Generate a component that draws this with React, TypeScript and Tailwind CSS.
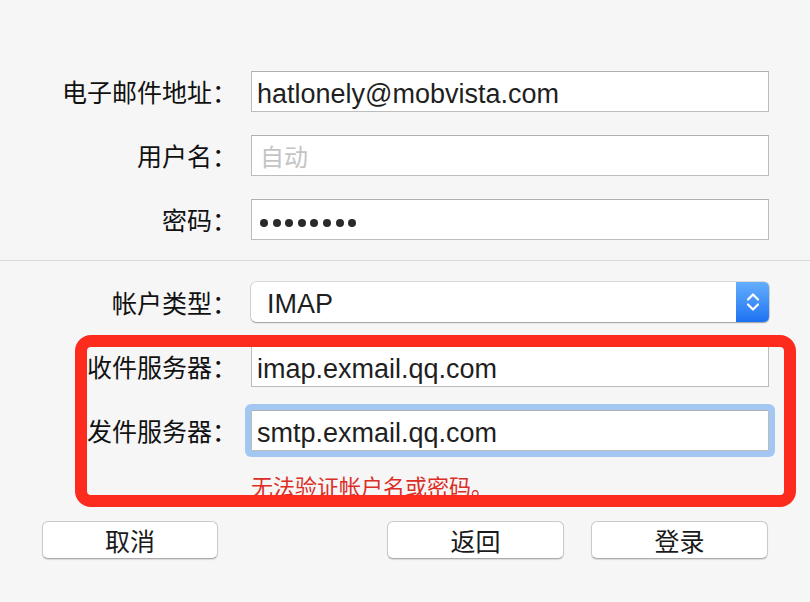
import React from "react";

const cjk = { fontFamily: '"Noto Sans CJK SC", "Noto Sans", sans-serif' };
const latin = { fontFamily: '"Liberation Sans", Arial, "Noto Sans CJK SC", sans-serif' };

function Label({ children }: { children: React.ReactNode }) {
  return (
    <div
      className="w-[237px] shrink-0 text-right text-[25px] leading-none text-[#111]"
      style={cjk}
    >
      {children}
    </div>
  );
}

function Field({ children, className = "" }: { children: React.ReactNode; className?: string }) {
  return (
    <div
      className={
        "ml-[14px] flex h-[41px] w-[518px] items-center border border-[#bcbcbc] border-t-[#b0b0b0] bg-white pl-[5px] pt-[6px] text-[27px] leading-none text-[#1f1f1f] " +
        className
      }
      style={latin}
    >
      {children}
    </div>
  );
}

function Btn({ children, w }: { children: React.ReactNode; w: string }) {
  return (
    <div
      className={
        "flex h-[38px] items-center justify-center rounded-[6px] border border-[#cacaca] border-b-[#adadad] bg-white text-[25px] leading-none text-[#1a1a1a] shadow-[0_1px_1px_rgba(0,0,0,0.12)] " +
        w
      }
      style={cjk}
    >
      {children}
    </div>
  );
}

export default function App() {
  return (
    <div className="relative h-[602px] w-[810px] overflow-hidden bg-[#f6f6f6]">
      <div className="flex flex-col pt-[71px]">
        <div className="flex items-center">
          <Label>电子邮件地址：</Label>
          <Field>hatlonely@mobvista.com</Field>
        </div>
        <div className="mt-[23px] flex items-center">
          <Label>用户名：</Label>
          <Field>
            <span className="-mt-[6px] ml-[3px] text-[24px] leading-none text-[#c4c4c4]" style={cjk}>
              自动
            </span>
          </Field>
        </div>
        <div className="mt-[23px] flex items-center">
          <Label>密码：</Label>
          <Field>
            <div className="ml-[3px] flex gap-[4.6px]">
              {[0, 1, 2, 3, 4, 5, 6, 7].map((i) => (
                <span key={i} className="block h-[8px] w-[8px] rounded-full bg-[#2a2a2a]" />
              ))}
            </div>
          </Field>
        </div>

        <div className="mt-[20px] h-px w-full bg-[#d9d9d9]" />

        <div className="mt-[21px] flex items-center">
          <Label>帐户类型：</Label>
          <div
            className="ml-[14px] flex h-[40px] w-[518px] items-stretch overflow-hidden rounded-[5px] bg-white shadow-[0_0_0_0.5px_rgba(0,0,0,0.22),0_1px_1.5px_rgba(0,0,0,0.28)]"
            style={latin}
          >
            <div className="flex flex-1 items-center pl-[16px] pt-[4px] text-[27px] leading-none text-[#1f1f1f]">
              IMAP
            </div>
            <div className="flex w-[33px] items-center justify-center bg-gradient-to-b from-[#64aefc] to-[#1d72f2]">
              <svg width="14" height="24" viewBox="0 0 14 24" fill="none">
                <path d="M2 9.5 L7 4.5 L12 9.5" stroke="white" strokeWidth="2.2" strokeLinecap="round" strokeLinejoin="round" />
                <path d="M2 14.5 L7 19.5 L12 14.5" stroke="white" strokeWidth="2.2" strokeLinecap="round" strokeLinejoin="round" />
              </svg>
            </div>
          </div>
        </div>

        <div className="mt-[24px] flex items-center">
          <Label>收件服务器：</Label>
          <Field className="h-[40px]">imap.exmail.qq.com</Field>
        </div>
        <div className="mt-[23px] flex items-center">
          <Label>发件服务器：</Label>
          <Field className="rounded-[2px] shadow-[0_0_0_6px_#a2c7f3] border-[#9fb9d8]">smtp.exmail.qq.com</Field>
        </div>

        <div className="ml-[251px] mt-[23px] text-[22px] leading-none text-[#dc2e26]" style={cjk}>
          无法验证帐户名或密码。
        </div>

        <div className="mt-[25px] flex items-center justify-between px-[42px]">
          <Btn w="w-[176px]">取消</Btn>
          <div className="flex gap-[27px]">
            <Btn w="w-[177px]">返回</Btn>
            <Btn w="w-[177px]">登录</Btn>
          </div>
        </div>
      </div>

      <div className="pointer-events-none absolute left-[75px] top-[335px] h-[172px] w-[721px] rounded-[16px] border-[12px] border-[#fc2b1e]" />
    </div>
  );
}
